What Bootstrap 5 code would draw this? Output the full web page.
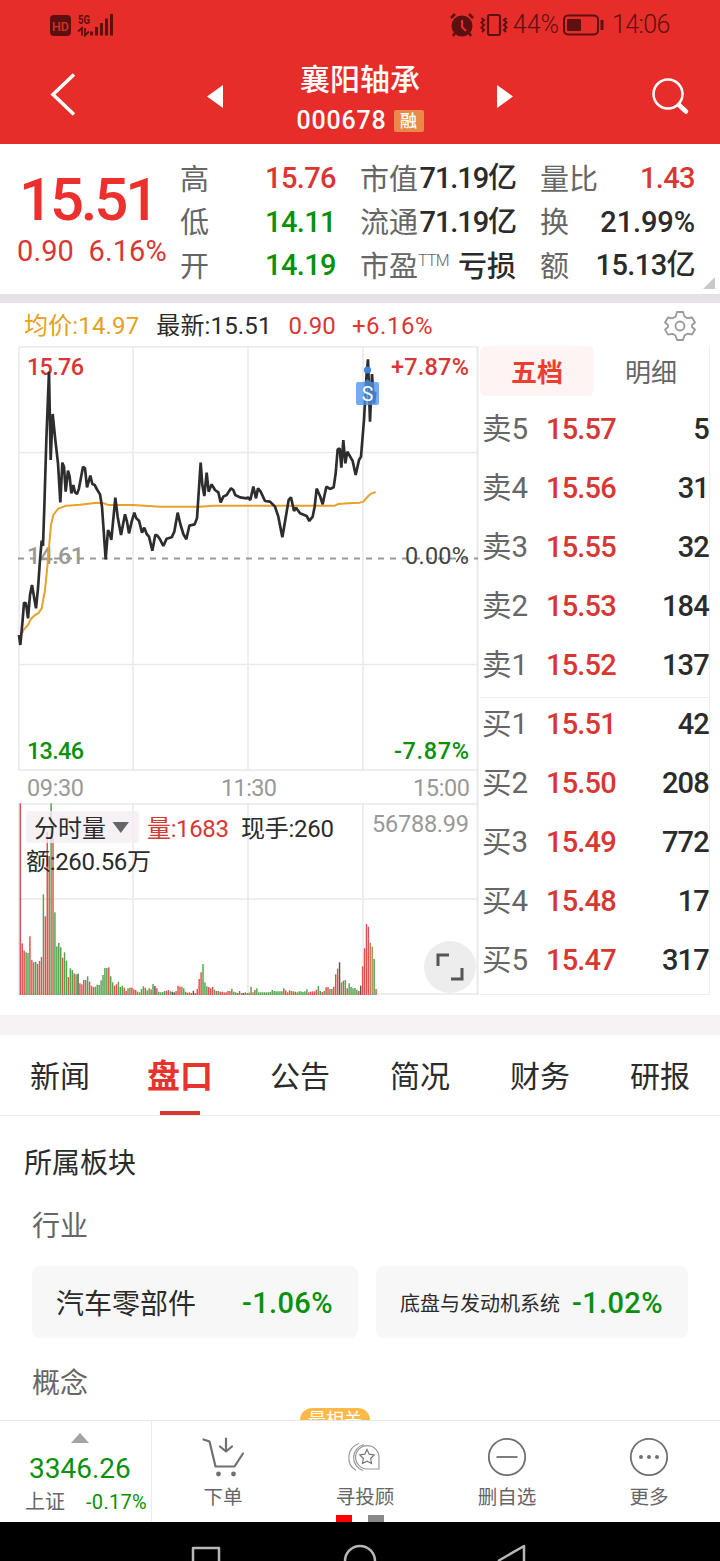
<!DOCTYPE html>
<html lang="zh-CN">
<head>
<meta charset="utf-8">
<meta name="viewport" content="width=device-width, initial-scale=1">
<title>襄阳轴承 000678</title>
<link rel="stylesheet" href="https://cdn.jsdelivr.net/npm/bootstrap@5.3.0/dist/css/bootstrap.min.css">
<style>
:root{--up:#d93733;--down:#0b900b;--ink:#2b2b2b;--soft:#666}
body{width:720px;height:1561px;overflow:hidden;background:#fff;color:var(--ink);font-family:Roboto,"Noto Sans CJK SC",sans-serif;line-height:1}
.up{color:var(--up)}.down{color:var(--down)}.soft{color:var(--soft)}
svg{display:block;flex:none}
.topbar{height:144px;background:#e62d2a;color:#fff}
.status-row{height:48px;padding:1px 50px 0 50px;color:#5d1010}
.status-row span{font-size:25px;font-weight:300;line-height:48px}
.head-row{height:96px;padding:0 30px 0 50px}
.head-mid{width:150px;margin-left:62px}
.head-name{font-size:30px;line-height:40px;font-weight:500;margin-top:12px}
.head-code{font-size:25px;font-weight:500;letter-spacing:.8px;line-height:30px}
.margin-tag{background:#e88b49;border-radius:2px;width:30px;height:22px;font-size:17px;line-height:22px;text-align:center;letter-spacing:0}
.quote{height:150px}
.price-col{width:180px;padding-left:17px}
.price-big{font-size:60px;font-weight:500;color:#ec302d;line-height:60px;margin-top:26px;letter-spacing:-3.2px;padding-left:2px}
.price-sub{font-size:29px;line-height:36px;margin-top:3px;white-space:pre;font-weight:400;letter-spacing:.1px}
.stat-col{padding-top:13px;margin-right:24px}
.stat{height:43.5px;font-size:29px;white-space:nowrap}
.stat b{font-weight:500;letter-spacing:-.6px}
.stat>.soft{padding-top:3px}
.tri-more{right:5px;bottom:5px}
.band-a{height:9px;background:#e6e1e6}
.band-b{height:20px;background:#f6f2f6}
.info-row{height:43px;padding:2px 24px 0 24px;font-size:24px;letter-spacing:.15px}
.market{height:669px}
.book{width:230px;height:649px;border-right:1px solid #eee;border-bottom:1px solid #eee}
.book-tabs{height:50px}
.book-tabs div{width:114px;font-size:26px;line-height:54px;height:50px;text-align:center;border-radius:6px}
.book-tabs .on{background:#fff4f4;color:#ee3c30;font-weight:700}
.book-body{padding-top:4px}
.lvl{height:59px;font-size:29.5px;padding-left:2px;line-height:59px}
.lvl .nm{width:64px}.lvl .px{width:90px;font-weight:500;font-size:29px;letter-spacing:-.8px}
.lvl .qty{font-weight:500;font-size:29px;letter-spacing:-.8px}
.lvl.first-buy{background:linear-gradient(#eee,#eee) 0 2px/100% 1px no-repeat}
.section-tabs{height:81px;border-bottom:1px solid #ececec;font-size:30px}
.section-tabs div{width:120px;text-align:center;line-height:80px;height:80px;padding-top:2px}
.section-tabs .on{color:#e6332f;font-weight:700;font-size:33px;background:linear-gradient(#d93733,#d93733) center bottom/40px 4px no-repeat}
.board{height:304px;padding:0 32px;overflow:hidden}
.board h2{font-size:28px;line-height:40px;font-weight:400;margin:28px 0 0 -8px}
.board h3{font-size:28px;line-height:40px;font-weight:400;color:var(--soft);margin:23px 0 19px}
.tile{height:72px;border-radius:8px;background:#f7f7f7;padding:2px 25px 0 24px;white-space:nowrap}
.tile span{padding-top:4px}
.tile b{font-weight:500;font-size:29px;letter-spacing:.4px}
.hot-tag{left:300px;bottom:0;width:70px;height:12px;background:#ffb947;color:#fff;border-radius:12px 12px 0 0;overflow:hidden;font-size:18px;line-height:24px;text-align:center}
.dock{height:102px;border-top:1px solid #e8e8e8;color:var(--soft)}
.index-box{width:152px;border-right:1px solid #ececec}
.dock-item{width:142px;font-size:19.5px}
.dock-item svg{margin-top:12px}
.dock-item span{line-height:28px;margin-top:3px}
.dot-page{width:16px;height:7px}
.sysbar{height:39px;background:#000}
</style>
</head>
<body>
<header class="topbar">
  <div class="status-row d-flex align-items-center">
    <svg width="66" height="24" viewBox="0 0 66 24"><rect y="2" width="21" height="21" rx="4" fill="#5d1010"/><text x="2" y="17.500" font-size="13" font-weight="500" fill="#d7302b" textLength="17" lengthAdjust="spacingAndGlyphs">HD</text><text x="28" y="10.500" font-size="13" font-weight="700" fill="#5d1010" textLength="12" lengthAdjust="spacingAndGlyphs">5G</text><path d="M28 18.500l4-3.500v7.500M35 15v7.500l4-4" fill="none" stroke="#5d1010" stroke-width="1.800"/><path d="M41.500 18.500v4M46.500 14v8.500M51.500 10v12.500M56.500 5.500v17M61.500 1v21.500" stroke="#5d1010" stroke-width="3"/></svg>
    <svg class="ms-auto" width="60" height="26" viewBox="0 0 60 26"><circle cx="13" cy="14" r="10.500" fill="#5d1010"/><path d="M2 6l4-4M24 6l-4-4M6 21l-2 3M20 21l2 3" stroke="#5d1010" stroke-width="2.500"/><path d="M13 8v7l4 4" fill="none" stroke="#e62d2a" stroke-width="2"/><rect x="39" y="3" width="12" height="20" rx="2" fill="none" stroke="#5d1010" stroke-width="2.200"/><path d="M32.500 6l2.500 2-2.500 2.500 2.500 2.500-2.500 2.500 2.500 2.500-2 2M57.500 6l-2.500 2 2.500 2.500-2.500 2.500 2.500 2.500-2.500 2.500 2 2" fill="none" stroke="#5d1010" stroke-width="2"/></svg>
    <span class="ms-1">44%</span>
    <svg class="ms-1" width="42" height="24" viewBox="0 0 42 24"><rect x="1" y="2.500" width="34" height="19" rx="4" fill="none" stroke="#5d1010" stroke-width="2"/><rect x="4" y="6" width="14" height="12" rx="1" fill="#5d1010"/><path d="M39 7v10" stroke="#5d1010" stroke-width="3"/></svg>
    <span style="margin-left:7px;width:58px;letter-spacing:-.6px">14:06</span>
  </div>
  <div class="head-row d-flex">
    <svg width="30" height="96" viewBox="0 0 30 96"><path d="M24 26.500L3 46.500l21 20" fill="none" stroke="#fff" stroke-width="3.500"/></svg>
    <svg style="margin-left:126px" width="20" height="96"><path d="M17 37v23L1 48.500z" fill="#fff"/></svg>
    <div class="head-mid text-center" style="margin-left:59px">
      <div class="head-name">襄阳轴承</div>
      <div class="head-code d-flex align-items-center justify-content-center" style="padding-top:6px">000678<span class="margin-tag" style="margin-left:7px">融</span></div>
    </div>
    <svg style="margin-left:62px" width="20" height="96"><path d="M0 37v23l16-11.500z" fill="#fff"/></svg>
    <svg class="ms-auto" width="38" height="96"><circle cx="16" cy="46" r="14.500" fill="none" stroke="#fff" stroke-width="2.500"/><path d="M27 57l7 6.500" stroke="#fff" stroke-width="4.500" stroke-linecap="round"/></svg>
  </div>
</header>

<section class="quote d-flex position-relative">
  <div class="price-col">
    <div class="price-big">15.51</div>
    <div class="price-sub up">0.90  6.16%</div>
  </div>
  <div class="stat-col" style="width:156px">
    <div class="stat d-flex justify-content-between align-items-center"><span class="soft">高</span><b class="up">15.76</b></div>
    <div class="stat d-flex justify-content-between align-items-center"><span class="soft">低</span><b class="down">14.11</b></div>
    <div class="stat d-flex justify-content-between align-items-center"><span class="soft">开</span><b class="down">14.19</b></div>
  </div>
  <div class="stat-col" style="width:156px">
    <div class="stat d-flex justify-content-between align-items-center"><span class="soft">市值</span><b style="letter-spacing:-1.1px">71.19亿</b></div>
    <div class="stat d-flex justify-content-between align-items-center"><span class="soft">流通</span><b style="letter-spacing:-1.1px">71.19亿</b></div>
    <div class="stat d-flex justify-content-between align-items-center"><span class="soft d-flex">市盈<small style="font-size:16px;font-weight:300;letter-spacing:-.7px">TTM</small></span><b style="letter-spacing:0;padding-top:3px">亏损</b></div>
  </div>
  <div class="stat-col me-0" style="width:155px">
    <div class="stat d-flex justify-content-between align-items-center"><span class="soft">量比</span><b class="up">1.43</b></div>
    <div class="stat d-flex justify-content-between align-items-center"><span class="soft">换</span><b style="letter-spacing:-.1px">21.99%</b></div>
    <div class="stat d-flex justify-content-between align-items-center"><span class="soft">额</span><b>15.13亿</b></div>
  </div>
  <svg class="tri-more position-absolute" width="12" height="12"><path d="M12 0v12H0z" fill="#c9c9c9"/></svg>
</section>
<div class="band-a"></div>

<div class="info-row d-flex align-items-center">
  <span style="color:#e6a01c">均价:14.97</span>
  <span style="margin-left:17px">最新:15.51</span>
  <span class="up" style="margin-left:17px">0.90</span>
  <span class="up" style="margin-left:16px;letter-spacing:.5px">+6.16%</span>
  <svg class="ms-auto" width="32" height="32" viewBox="0 0 32 32" fill="none" stroke="#999" stroke-width="1.800" stroke-linejoin="round"><circle cx="16" cy="16" r="4.500"/><path d="M13 2h6l1.500 4.500 3 1.700L28 7.500l3 5-3 2.500v2l3 2.500-3 5-4.500-.8-3 1.700L19 30h-6l-1.500-4.500-3-1.700-4.500.8-3-5L4 17v-2l-3-2.500 3-5 4.500.8 3-1.700z"/></svg>
</div>

<main class="market d-flex">
  <svg width="480" height="650" viewBox="0 346 480 650">
    <g stroke="#e9e9e9" stroke-width="1.500" fill="none">
      <path d="M19 347V770M133 347V770M248 347V770M363 347V770M19 804V995M133 804V995M248 804V995M363 804V995M18 347H478M18 452.500H478M18 664.500H478M18 770H478M18 804H478M18 899H478M18 994H478"/>
      <path d="M477.500 346V995" stroke-width="2"/>
    </g>
    <path d="M18 558.500H478" stroke="#999" stroke-width="1.800" stroke-dasharray="6 6"/>
    <g font-weight="500" font-size="23.500">
      <text x="27" y="564" fill="#999" textLength="57">14.61</text>
      <text x="27" y="375" fill="#d93733" textLength="57">15.76</text>
      <text x="391" y="375" fill="#d93733" textLength="78">+7.87%</text>
      <text x="405" y="564" fill="#444" font-weight="400" textLength="64">0.00%</text>
      <text x="27" y="759" fill="#0b900b" textLength="57">13.46</text>
      <text x="394" y="759" fill="#0b900b" textLength="75">-7.87%</text>
      <g fill="#999" font-weight="400"><text x="27" y="796" textLength="57">09:30</text><text x="221" y="796" textLength="56">11:30</text><text x="413" y="796" textLength="57">15:00</text></g>
    </g>
    <g transform="translate(0 340) scale(.33333)" fill="none">
      <path stroke="#e8a129" stroke-width="6" stroke-linejoin="round" d="M66 880L72 868 84 855 92 838 105 825 115 820 125 805 135 750 142 680 148 610 153 555 160 525 175 506 200 497 240 494 290 488 312 490 325 495H400L480 500H600L640 497H1005L1015 492 1045 490 1080 488 1090 485 1105 468 1115 460 1127 456"/>
      <path stroke="#2d2d2d" stroke-width="8" stroke-linejoin="bevel" d="M57 885L61 915 68 840 72 788 78 790 84 835 90 765 96 735 102 770 108 805 114 745 120 660 125 602 129 618 133 500 139 300 147 95 152 360 158 222 166 300 174 370 181 487 187 368 192 380 197 455 204 392 209 410 214 460 220 435 225 457 231 462 237 445 249 380 255 385 261 442 271 407 277 432 284 435 292 450 300 463 306 500 317 658 324 570 329 580 334 600 346 473 353 530 363 585 375 523 381 545 387 580 395 545 403 518 409 535 417 542 426 578 433 563 440 582 447 590 457 632 466 584 473 588 480 598 490 618 500 596 515 592 523 575 533 518 541 552 550 582 559 598 568 557 584 553 591 535 602 368 607 435 613 468 620 398 626 455 635 433 645 450 655 457 662 487 670 470 680 465 693 445 700 450 706 466 712 468 720 472 740 475 744 472 751 480 760 440 768 475 774 445 782 455 795 483 810 485 825 500 835 530 847 592 855 545 866 480 873 472 882 513 888 503 900 520 920 528 928 543 938 530 944 500 950 446 960 468 968 493 979 440 990 447 1001 442 1007 400 1013 328 1019 325 1024 383 1030 300 1036 370 1042 335 1058 363 1067 405 1077 360 1083 350 1092 240 1100 100 1104 58 1110 245 1116 102 1122 190 1126 155"/>
    </g>
    <circle cx="367.500" cy="370" r="3.600" fill="#3f86dc"/>
    <path d="M358 382h6l3.500-3 3.500 3h6q2 0 2 2v19q0 2-2 2h-19q-2 0-2-2v-19q0-2 2-2z" fill="#4a93ec" fill-opacity=".78"/>
    <text x="367.500" y="400.500" text-anchor="middle" font-size="19.500" fill="#fff">S</text>
    <g id="volume"></g>
    <rect x="26" y="811" width="113" height="32" rx="3" fill="#f3eef3" fill-opacity=".8"/>
    <g font-size="24" fill="#2b2b2b">
      <text x="34" y="837">分时量</text><path d="M112.500 822h16.500l-8.200 11z" fill="#666"/>
      <text x="147" y="837" fill="#d93733" textLength="82">量:1683</text>
      <text x="241" y="837" textLength="93">现手:260</text>
      <text x="26" y="869.500" textLength="125">额:260.56万</text>
      <text x="372" y="832" fill="#999" font-size="23.500" textLength="97">56788.99</text>
    </g>
    <circle cx="450" cy="967" r="26" fill="#ededed"/>
    <path d="M449 955H438v11M462 968v11H451" fill="none" stroke="#555" stroke-width="3"/>
  </svg>
  <div class="book">
    <div class="book-tabs d-flex"><div class="on">五档</div><div class="soft">明细</div></div>
    <div class="book-body">
      <div class="lvl d-flex"><span class="nm soft">卖5</span><span class="px up">15.57</span><span class="qty ms-auto">5</span></div>
      <div class="lvl d-flex"><span class="nm soft">卖4</span><span class="px up">15.56</span><span class="qty ms-auto">31</span></div>
      <div class="lvl d-flex"><span class="nm soft">卖3</span><span class="px up">15.55</span><span class="qty ms-auto">32</span></div>
      <div class="lvl d-flex"><span class="nm soft">卖2</span><span class="px up">15.53</span><span class="qty ms-auto">184</span></div>
      <div class="lvl d-flex"><span class="nm soft">卖1</span><span class="px up">15.52</span><span class="qty ms-auto">137</span></div>
      <div class="lvl first-buy d-flex"><span class="nm soft">买1</span><span class="px up">15.51</span><span class="qty ms-auto">42</span></div>
      <div class="lvl d-flex"><span class="nm soft">买2</span><span class="px up">15.50</span><span class="qty ms-auto">208</span></div>
      <div class="lvl d-flex"><span class="nm soft">买3</span><span class="px up">15.49</span><span class="qty ms-auto">772</span></div>
      <div class="lvl d-flex"><span class="nm soft">买4</span><span class="px up">15.48</span><span class="qty ms-auto">17</span></div>
      <div class="lvl d-flex"><span class="nm soft">买5</span><span class="px up">15.47</span><span class="qty ms-auto">317</span></div>
    </div>
  </div>
</main>
<div class="band-b"></div>

<nav class="section-tabs d-flex"><div>新闻</div><div class="on">盘口</div><div>公告</div><div>简况</div><div>财务</div><div>研报</div></nav>

<section class="board position-relative">
  <h2>所属板块</h2>
  <h3>行业</h3>
  <div class="d-flex">
    <div class="tile d-flex justify-content-between align-items-center" style="width:326px"><span style="font-size:28px">汽车零部件</span><b class="down">-1.06%</b></div>
    <div class="tile d-flex justify-content-between align-items-center" style="width:312px;margin-left:18px"><span style="font-size:20px;padding-top:2px">底盘与发动机系统</span><b class="down">-1.02%</b></div>
  </div>
  <h3 style="margin-top:26px">概念</h3>
  <div class="hot-tag position-absolute">最相关</div>
</section>

<footer class="dock d-flex">
  <div class="index-box">
    <svg style="margin:12px 0 0 71px" width="18" height="10"><path d="M9 0l9 10H0z" fill="#a3a3a3"/></svg>
    <div class="down" style="font-size:28px;line-height:36px;margin:8px 0 0 29px">3346.26</div>
    <div class="d-flex justify-content-between" style="font-size:20px;line-height:28px;padding:1px 4px 0 25px"><span>上证</span><span class="down" style="letter-spacing:.3px">-0.17%</span></div>
  </div>
  <div class="dock-item d-flex flex-column align-items-center">
    <svg width="48" height="48" viewBox="199 1433 48 48" fill="none" stroke="#707070" stroke-width="2.200" stroke-linecap="round" stroke-linejoin="round"><path d="M203.500 1439.500l6 2 6 25h19l8.500-13M226 1438.500v13M220 1446.500l6 5 6-5"/><circle cx="218.500" cy="1474" r="1.300" fill="#707070"/><circle cx="233.500" cy="1474" r="1.300" fill="#707070"/></svg>
    <span>下单</span>
  </div>
  <div class="dock-item d-flex flex-column align-items-center">
    <svg width="48" height="48" viewBox="341 1433 48 48" fill="none" stroke="#999" stroke-width="1.200"><path d="M379 1469h-12a11.700 11.700 0 1 1 12-11.700zM363 1470.500a13.500 13.500 0 0 1 1-26M356 1470.500a15 15 0 0 1 3-27" /><path d="M367 1449.500l2.200 4.700 5 .7-3.600 3.600.9 5-4.500-2.400-4.500 2.400.9-5-3.600-3.600 5-.7z" stroke="#777"/></svg>
    <span>寻投顾</span>
    <div class="d-flex" style="gap:16px;margin-top:3px;margin-left:-10px"><i class="dot-page" style="background:#f00"></i><i class="dot-page" style="background:#888"></i></div>
  </div>
  <div class="dock-item d-flex flex-column align-items-center">
    <svg width="48" height="48" fill="none" stroke="#707070" stroke-width="1.800"><circle cx="24" cy="24" r="18.200"/><path d="M13.500 24h21"/></svg>
    <span>删自选</span>
  </div>
  <div class="dock-item d-flex flex-column align-items-center">
    <svg width="48" height="48"><circle cx="24" cy="24" r="18.200" fill="none" stroke="#707070" stroke-width="1.800"/><g fill="#707070"><circle cx="16" cy="24" r="2"/><circle cx="24" cy="24" r="2"/><circle cx="32" cy="24" r="2"/></g></svg>
    <span>更多</span>
  </div>
</footer>
<div class="sysbar"><svg width="720" height="39" fill="none" stroke="#b8b8b8" stroke-width="2.500" stroke-linejoin="round"><path d="M193 39V26h26v13"/><circle cx="360" cy="39" r="15"/><path d="M498 39l26-15v15"/></svg></div>

<script src="https://cdn.jsdelivr.net/npm/bootstrap@5.3.0/dist/js/bootstrap.bundle.min.js"></script>
<script>
// Per-minute volume: bar height in thirds of a pixel, then r (up), g (down), k (flat) or t (overlap)
const bars = "575r 155r 133r 128g 126g 176r 105r 98g 100g 93r 102r 114r 302g 236r 490r 417r 575g 470r 248g 146g 156g 143g 112r 128g 103g 54r 80g 75g 65r 62g 64k 35r 32r 45r 45g 56g 40r 28r 24r 25g 31g 30g 44g 60g 81g 81g 83r 56g 38g 28r 32r 40g 24g 28g 22r 12r 20g 22r 22r 17r 15r 10g 8g 18g 26g 22r 14g 20g 17r 33g 27k 20r 10g 8g 9g 12g 13r 15r 11g 10k 8k 12r 28r 25r 25g 20g 10r 7r 8r 6r 13k 6r 18r 48r 68r 93g 38g 26g 24r 20r 24r 16g 12r 12g 10r 10r 8r 8r 12r 12r 19g 10g 8g 6r 12r 6g 6k 8r 6g 7r 25g 8g 15r 20g 8g 8g 8g 8g 8g 8g 9g 15g 12g 11g 11g 11g 11g 20r 14r 8r 14r 12g 11r 10r 8g 11g 11g 9g 11g 17g 8r 10r 11r 11r 16r 27g 12g 9r 12g 23r 24r 18g 18r 25r 62r 79r 98k 38g 43r 45g 20r 35g 24g 20g 21g 16g 12r 28k 86r 140r 213r 205r 157t 145t 108g 18r".split(" ");
const tint = {r:"#e0504e", g:"#4fa548", k:"#555", t:"#bd8358"};
document.getElementById("volume").innerHTML = bars.map((b, i) => {
  const h = parseInt(b) / 3;
  return `<rect x="${(19.6 + i * 1.923).toFixed(2)}" y="${(995 - h).toFixed(1)}" width="1.45" height="${h.toFixed(1)}" fill="${tint[b.slice(-1)]}"/>`;
}).join("");
</script>
</body>
</html>
